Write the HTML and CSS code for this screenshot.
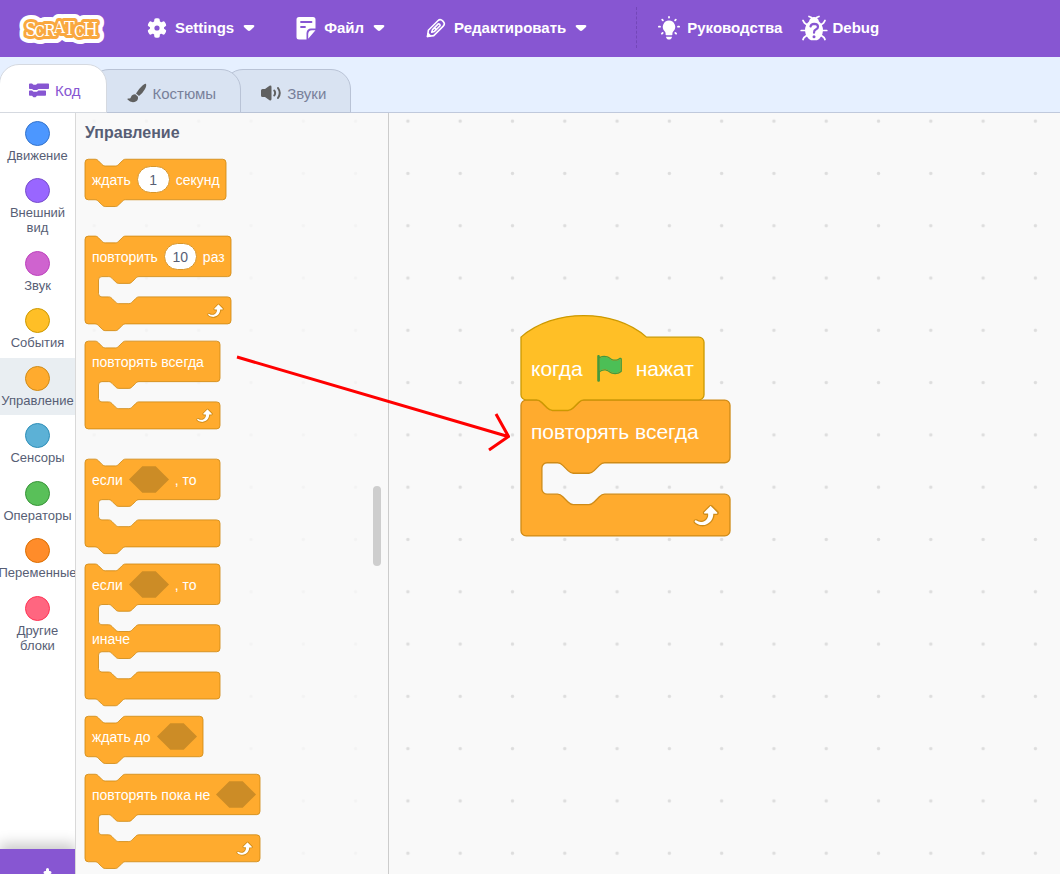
FILE: index.html
```html
<!DOCTYPE html>
<html lang="ru">
<head>
<meta charset="utf-8">
<title>Scratch</title>
<link rel="stylesheet" href="styles.css">
</head>
<body>
<svg class="sprites" aria-hidden="true">
  <symbol id="loop" viewBox="0 0 24 24">
    <path fill="#cf8b17" d="M23.3,11c-0.3,0.6-0.9,1-1.5,1h-1.6c-0.1,1.3-0.5,2.5-1.1,3.6c-0.9,1.7-2.3,3.2-4.1,4.1c-1.7,0.9-3.6,1.2-5.5,0.9c-1.8-0.3-3.5-1.1-4.9-2.3c-0.7-0.7-0.7-1.9,0-2.6c0.6-0.6,1.6-0.7,2.3-0.2H7c0.9,0.6,1.9,0.9,2.9,0.9s1.9-0.3,2.7-0.9c1.1-0.8,1.8-2.1,1.8-3.5h-1.5c-0.9,0-1.7-0.7-1.7-1.7c0-0.4,0.2-0.9,0.5-1.2l4.4-4.4c0.7-0.6,1.7-0.6,2.4,0L23,9.2C23.5,9.7,23.6,10.4,23.3,11z"/>
    <path fill="#fff" d="M21.8,11h-2.6c0,1.5-0.3,2.9-1,4.2c-0.8,1.6-2.1,2.8-3.7,3.6c-1.5,0.8-3.3,1.1-4.9,0.8c-1.6-0.2-3.2-1-4.4-2.1c-0.4-0.3-0.4-0.9-0.1-1.2c0.3-0.4,0.9-0.4,1.2-0.1l0,0c1,0.7,2.2,1.1,3.4,1.1s2.3-0.3,3.3-1c0.9-0.6,1.6-1.5,2-2.6c0.3-0.9,0.4-1.8,0.2-2.8h-2.4c-0.4,0-0.7-0.3-0.7-0.7c0-0.2,0.1-0.3,0.2-0.4l4.4-4.4c0.3-0.3,0.7-0.3,0.9,0L22,9.8c0.3,0.3,0.4,0.6,0.3,0.9S22,11,21.8,11z"/>
  </symbol>
  <symbol id="hex" viewBox="0 0 48 32"><path fill="#cc8c26" d="M16,0H32L48,16L32,32H16L0,16z"/></symbol>
  <symbol id="caret" viewBox="0 0 12 8"><path fill="#fff" d="M2,1H10Q12,1 11,3L7.500,6.300Q6,7.600 4.500,6.300L1,3Q0,1 2,1z"/></symbol>
</svg>

<header class="menu-bar">
  <a class="logo" href="#" aria-label="Scratch">
    <svg width="88" height="36" viewBox="0 0 88 36">
      <g class="logo-text">
        <g class="logo-halo">
          <text x="8" y="26" font-size="19">S</text><text x="17" y="27" font-size="16">C</text><text x="27" y="26" font-size="17">R</text><text x="37" y="23" font-size="17">A</text><text x="47" y="25" font-size="18">T</text><text x="57" y="27" font-size="16">C</text><text x="66" y="26" font-size="19">H</text>
        </g>
        <g class="logo-rim" aria-hidden="true">
          <text x="8" y="26" font-size="19">S</text><text x="17" y="27" font-size="16">C</text><text x="27" y="26" font-size="17">R</text><text x="37" y="23" font-size="17">A</text><text x="47" y="25" font-size="18">T</text><text x="57" y="27" font-size="16">C</text><text x="66" y="26" font-size="19">H</text>
        </g>
        <g class="logo-face" aria-hidden="true">
          <text x="8" y="26" font-size="19">S</text><text x="17" y="27" font-size="16">C</text><text x="27" y="26" font-size="17">R</text><text x="37" y="23" font-size="17">A</text><text x="47" y="25" font-size="18">T</text><text x="57" y="27" font-size="16">C</text><text x="66" y="26" font-size="19">H</text>
        </g>
      </g>
    </svg>
  </a>
  <nav class="menus">
    <button class="menu" type="button">
      <svg width="20" height="20" viewBox="0 0 20 20"><g fill="#fff"><circle cx="10" cy="10" r="7.200"/><rect x="7.200" y="0.300" width="5.600" height="19.400" rx="1.800"/><rect x="7.200" y="0.300" width="5.600" height="19.400" rx="1.800" transform="rotate(60 10 10)"/><rect x="7.200" y="0.300" width="5.600" height="19.400" rx="1.800" transform="rotate(120 10 10)"/></g><circle cx="10" cy="10" r="2.600" fill="#8756d2"/></svg>
      <span>Settings</span>
      <svg class="caret" width="12" height="8"><use href="#caret"/></svg>
    </button>
    <button class="menu" type="button">
      <svg width="20" height="24" viewBox="0 0 20 24"><path fill="#fff" d="M3,1H17Q19.500,1 19.500,3.500V12.500H15Q11,12.500 10.500,17V23.500H3Q0.500,23.500 0.500,21V3.500Q0.500,1 3,1zM19.500,14.200L12.200,22.800V18Q12.400,14.200 16,14.200z"/><path stroke="#8756d2" stroke-width="1.800" stroke-linecap="round" d="M5,6H15.500M5,11H9"/></svg>
      <span>Файл</span>
      <svg class="caret" width="12" height="8"><use href="#caret"/></svg>
    </button>
    <button class="menu" type="button">
      <svg width="20" height="20" viewBox="0 0 20 20"><g transform="translate(1.500 18.500) rotate(-45)" fill="none" stroke="#fff" stroke-width="1.600" stroke-linejoin="round" stroke-linecap="round"><path d="M0,0L5,-3.800H18.500Q21.800,-3.800 21.800,0T18.500,3.800H5z"/><path d="M16.500,-1.300H8.500L6,0L8.500,1.300H16.500Q18,0 16.500,-1.300z"/><path d="M11,-1V1"/><path fill="#fff" d="M0,0L2.500,-1.500V1.500z"/></g></svg>
      <span>Редактировать</span>
      <svg class="caret" width="12" height="8"><use href="#caret"/></svg>
    </button>
  </nav>
  <nav class="help">
    <button class="tool" type="button">
      <svg width="22" height="24" viewBox="0 0 22 24"><path fill="#fff" d="M11,4.500A6.300,6.300 0 0 1 15.400,15.200Q14.400,16.200 14.400,17.500V18.500Q14.400,19.300 13.600,19.300H8.400Q7.600,19.300 7.600,18.500V17.500Q7.600,16.200 6.600,15.200A6.300,6.300 0 0 1 11,4.500zM8,20.800H14Q13.600,23.600 11,23.600T8,20.800z"/><g stroke="#fff" stroke-width="1.800" stroke-linecap="round"><path d="M11,0.900V1.600M4.200,3.600L4.900,4.300M17.800,3.600L17.100,4.300M0.900,10.700H2M21.100,10.700H20M3.900,17.700L4.700,16.900M18.100,17.700L17.300,16.900"/></g></svg>
      <span>Руководства</span>
    </button>
    <button class="tool tool-debug" type="button">
      <svg width="28" height="26" viewBox="0 0 28 26"><g fill="none" stroke="#fff" stroke-width="1.700" stroke-linecap="round" stroke-linejoin="round"><path d="M9,1.500L11.500,2.500M19,1.500L16.500,2.500M3,5.500L4.500,8L8,10.500M25,5.500L23.500,8L20,10.500M1.200,15.500H7M26.800,15.500H21M3,24.500L4,22.500L8,19.500M25,24.500L24,22.500L20,19.500"/></g><path fill="#fff" d="M9,6.500Q10,2 14,2T19,6.500Q23,9.500 23,15.500Q22.500,22.500 17,25.300H11Q5.500,22.500 5,15.500Q5,9.500 9,6.500z"/><path fill="none" stroke="#8756d2" stroke-width="2.200" stroke-linecap="round" d="M10.500,11.500Q11,9 14.200,8.800Q18,8.800 18,11.800Q18,13.600 15.800,14.600Q14,15.500 14,17.700"/><circle cx="14" cy="21.700" r="1.500" fill="#8756d2"/></svg>
      <span>Debug</span>
    </button>
  </nav>
</header>

<div class="tabs" role="tablist">
  <button class="tab tab-active" role="tab" aria-selected="true" type="button">
    <svg width="20" height="16" viewBox="0 0 20 16"><path fill="#8756d2" d="M1,1.500H3L4.500,2.800H7L8.500,1.500H19.200Q20,1.500 20,2.300V6.200Q20,7 19.200,7H9.500L8,8H4.500L3,7H0.800Q0,7 0,6.200V2.300Q0,1.500 1,1.500zM0.800,8.500H3L4.500,9.800H8L9.300,8.500H16.200Q17,8.500 17,9.300V13Q17,13.800 16.200,13.800H8L6.500,15.200H4.500L3,13.800H0.800Q0,13.800 0,13V9.300Q0,8.500 0.800,8.500z"/></svg>
    Код
  </button>
  <button class="tab" role="tab" aria-selected="false" type="button">
    <svg width="20" height="20" viewBox="0 0 20 20"><path fill="#606060" d="M18.800,0.800Q20,2 18,6Q15.500,10.500 12,13L9,10.500Q11.500,6 15.500,2.500Q18,0.200 18.800,0.800zM8.300,11.300L11,13.700Q11.500,18 7.500,19Q3.500,19.800 0.500,16.500Q0,15.300 1.500,15.500Q3.500,16 4,14Q5,11.200 8.300,11.300z"/></svg>
    Костюмы
  </button>
  <button class="tab" role="tab" aria-selected="false" type="button">
    <svg width="20" height="18" viewBox="0 0 20 18"><path fill="#606060" d="M1.500,5H4L8.500,1.800Q10.500,1 10.500,3V15Q10.500,17 8.500,16.200L4,13H1.500Q0,13 0,11.500V6.500Q0,5 1.500,5z"/><path fill="none" stroke="#606060" stroke-width="2" stroke-linecap="round" d="M13.300,6.500Q15,9 13.300,11.500M17,4Q20.500,9 17,14"/></svg>
    Звуки
  </button>
</div>

<main class="editor">
  <aside class="sidebar">
    <nav class="categories">
      <button class="category" type="button"><i class="dot motion"></i>Движение</button>
      <button class="category" type="button"><i class="dot looks"></i>Внешний вид</button>
      <button class="category" type="button"><i class="dot sound"></i>Звук</button>
      <button class="category" type="button"><i class="dot events"></i>События</button>
      <button class="category selected" type="button"><i class="dot control"></i>Управление</button>
      <button class="category" type="button"><i class="dot sensing"></i>Сенсоры</button>
      <button class="category" type="button"><i class="dot operators"></i>Операторы</button>
      <button class="category" type="button"><i class="dot variables"></i>Переменные</button>
      <button class="category" type="button"><i class="dot custom"></i>Другие блоки</button>
    </nav>
    <button class="extensions" type="button" aria-label="Добавить расширение">
      <svg width="38" height="32" viewBox="0 0 38 32"><path stroke="#fff" stroke-width="3" stroke-linecap="round" d="M28.500,3.500V10M26,6.500H31"/></svg>
    </button>
  </aside>

  <div class="workspace">
    <svg class="grid" width="100%" height="100%" aria-hidden="true">
      <defs><pattern id="dots" width="40" height="40" patternUnits="userSpaceOnUse" patternTransform="translate(-8 -18) scale(1.3073)"><circle cx="20" cy="20" r="1.300" fill="#ddd"/></pattern></defs>
      <rect width="100%" height="100%" fill="url(#dots)"/>
    </svg>

    <section class="palette">
      <h2 class="palette-title">Управление</h2>

      <div class="block spaced-wide">
        <svg class="shape" width="141" height="41" viewBox="0 0 167 48"><path d="M0,4A4,4 0 0 1 4,0H12c2,0 3,1 4,2l4,4c1,1 2,2 4,2h12c2,0 3,-1 4,-2l4,-4c1,-1 2,-2 4,-2H163a4,4 0 0 1 4,4v40a4,4 0 0 1 -4,4H48c-2,0 -3,1 -4,2l-4,4c-1,1 -2,2 -4,2h-12c-2,0 -3,-1 -4,-2l-4,-4c-1,-1 -2,-2 -4,-2H4a4,4 0 0 1 -4,-4z"/></svg>
        <div class="label"><label for="wait">ждать</label><input id="wait" type="text" value="1"><span>секунд</span></div>
      </div>

      <div class="block">
        <svg class="shape" width="146" height="88" viewBox="0 0 173 104"><path d="M0,4A4,4 0 0 1 4,0H12c2,0 3,1 4,2l4,4c1,1 2,2 4,2h12c2,0 3,-1 4,-2l4,-4c1,-1 2,-2 4,-2H169a4,4 0 0 1 4,4v40a4,4 0 0 1 -4,4H64c-2,0 -3,1 -4,2l-4,4c-1,1 -2,2 -4,2h-12c-2,0 -3,-1 -4,-2l-4,-4c-1,-1 -2,-2 -4,-2h-8a4,4 0 0 0 -4,4v16a4,4 0 0 0 4,4h8c2,0 3,1 4,2l4,4c1,1 2,2 4,2h12c2,0 3,-1 4,-2l4,-4c1,-1 2,-2 4,-2H169a4,4 0 0 1 4,4v24a4,4 0 0 1 -4,4H48c-2,0 -3,1 -4,2l-4,4c-1,1 -2,2 -4,2h-12c-2,0 -3,-1 -4,-2l-4,-4c-1,-1 -2,-2 -4,-2H4a4,4 0 0 1 -4,-4z"/><use href="#loop" x="141" y="76" width="24" height="24"/></svg>
        <div class="label"><label for="repeat">повторить</label><input id="repeat" type="text" value="10"><span>раз</span></div>
      </div>

      <div class="block spaced">
        <svg class="shape" width="135" height="88" viewBox="0 0 160 104"><path d="M0,4A4,4 0 0 1 4,0H12c2,0 3,1 4,2l4,4c1,1 2,2 4,2h12c2,0 3,-1 4,-2l4,-4c1,-1 2,-2 4,-2H156a4,4 0 0 1 4,4v40a4,4 0 0 1 -4,4H64c-2,0 -3,1 -4,2l-4,4c-1,1 -2,2 -4,2h-12c-2,0 -3,-1 -4,-2l-4,-4c-1,-1 -2,-2 -4,-2h-8a4,4 0 0 0 -4,4v16a4,4 0 0 0 4,4h8c2,0 3,1 4,2l4,4c1,1 2,2 4,2h12c2,0 3,-1 4,-2l4,-4c1,-1 2,-2 4,-2H156a4,4 0 0 1 4,4v24a4,4 0 0 1 -4,4H4a4,4 0 0 1 -4,-4z"/><use href="#loop" x="128" y="76" width="24" height="24"/></svg>
        <div class="label"><span>повторять всегда</span></div>
      </div>

      <div class="block">
        <svg class="shape" width="135" height="88" viewBox="0 0 160 104"><path d="M0,4A4,4 0 0 1 4,0H12c2,0 3,1 4,2l4,4c1,1 2,2 4,2h12c2,0 3,-1 4,-2l4,-4c1,-1 2,-2 4,-2H156a4,4 0 0 1 4,4v40a4,4 0 0 1 -4,4H64c-2,0 -3,1 -4,2l-4,4c-1,1 -2,2 -4,2h-12c-2,0 -3,-1 -4,-2l-4,-4c-1,-1 -2,-2 -4,-2h-8a4,4 0 0 0 -4,4v16a4,4 0 0 0 4,4h8c2,0 3,1 4,2l4,4c1,1 2,2 4,2h12c2,0 3,-1 4,-2l4,-4c1,-1 2,-2 4,-2H156a4,4 0 0 1 4,4v24a4,4 0 0 1 -4,4H48c-2,0 -3,1 -4,2l-4,4c-1,1 -2,2 -4,2h-12c-2,0 -3,-1 -4,-2l-4,-4c-1,-1 -2,-2 -4,-2H4a4,4 0 0 1 -4,-4z"/></svg>
        <div class="label"><span>если</span><svg width="40" height="27"><use href="#hex"/></svg><span>, то</span></div>
      </div>

      <div class="block">
        <svg class="shape" width="135" height="135" viewBox="0 0 160 160"><path d="M0,4A4,4 0 0 1 4,0H12c2,0 3,1 4,2l4,4c1,1 2,2 4,2h12c2,0 3,-1 4,-2l4,-4c1,-1 2,-2 4,-2H156a4,4 0 0 1 4,4v40a4,4 0 0 1 -4,4H64c-2,0 -3,1 -4,2l-4,4c-1,1 -2,2 -4,2h-12c-2,0 -3,-1 -4,-2l-4,-4c-1,-1 -2,-2 -4,-2h-8a4,4 0 0 0 -4,4v16a4,4 0 0 0 4,4h8c2,0 3,1 4,2l4,4c1,1 2,2 4,2h12c2,0 3,-1 4,-2l4,-4c1,-1 2,-2 4,-2H156a4,4 0 0 1 4,4v24a4,4 0 0 1 -4,4H64c-2,0 -3,1 -4,2l-4,4c-1,1 -2,2 -4,2h-12c-2,0 -3,-1 -4,-2l-4,-4c-1,-1 -2,-2 -4,-2h-8a4,4 0 0 0 -4,4v16a4,4 0 0 0 4,4h8c2,0 3,1 4,2l4,4c1,1 2,2 4,2h12c2,0 3,-1 4,-2l4,-4c1,-1 2,-2 4,-2H156a4,4 0 0 1 4,4v24a4,4 0 0 1 -4,4H48c-2,0 -3,1 -4,2l-4,4c-1,1 -2,2 -4,2h-12c-2,0 -3,-1 -4,-2l-4,-4c-1,-1 -2,-2 -4,-2H4a4,4 0 0 1 -4,-4z"/></svg>
        <div class="label"><span>если</span><svg width="40" height="27"><use href="#hex"/></svg><span>, то</span></div>
        <div class="label label-else"><span>иначе</span></div>
      </div>

      <div class="block">
        <svg class="shape" width="118" height="41" viewBox="0 0 140 48"><path d="M0,4A4,4 0 0 1 4,0H12c2,0 3,1 4,2l4,4c1,1 2,2 4,2h12c2,0 3,-1 4,-2l4,-4c1,-1 2,-2 4,-2H136a4,4 0 0 1 4,4v40a4,4 0 0 1 -4,4H48c-2,0 -3,1 -4,2l-4,4c-1,1 -2,2 -4,2h-12c-2,0 -3,-1 -4,-2l-4,-4c-1,-1 -2,-2 -4,-2H4a4,4 0 0 1 -4,-4z"/></svg>
        <div class="label"><span>ждать до</span><svg width="40" height="27"><use href="#hex"/></svg></div>
      </div>

      <div class="block">
        <svg class="shape" width="175" height="88" viewBox="0 0 208 104"><path d="M0,4A4,4 0 0 1 4,0H12c2,0 3,1 4,2l4,4c1,1 2,2 4,2h12c2,0 3,-1 4,-2l4,-4c1,-1 2,-2 4,-2H204a4,4 0 0 1 4,4v40a4,4 0 0 1 -4,4H64c-2,0 -3,1 -4,2l-4,4c-1,1 -2,2 -4,2h-12c-2,0 -3,-1 -4,-2l-4,-4c-1,-1 -2,-2 -4,-2h-8a4,4 0 0 0 -4,4v16a4,4 0 0 0 4,4h8c2,0 3,1 4,2l4,4c1,1 2,2 4,2h12c2,0 3,-1 4,-2l4,-4c1,-1 2,-2 4,-2H204a4,4 0 0 1 4,4v24a4,4 0 0 1 -4,4H48c-2,0 -3,1 -4,2l-4,4c-1,1 -2,2 -4,2h-12c-2,0 -3,-1 -4,-2l-4,-4c-1,-1 -2,-2 -4,-2H4a4,4 0 0 1 -4,-4z"/><use href="#loop" x="176" y="76" width="24" height="24"/></svg>
        <div class="label"><span>повторять пока не</span><svg width="40" height="27"><use href="#hex"/></svg></div>
      </div>
      <div class="scroll-thumb"></div>
    </section>

    <div class="script">
      <div class="block block-large hat">
        <svg class="shape" width="183" height="63" viewBox="0 0 140 48"><path d="M0,0c25,-22 71,-22 96,0H136a4,4 0 0 1 4,4v40a4,4 0 0 1 -4,4H48c-2,0 -3,1 -4,2l-4,4c-1,1 -2,2 -4,2h-12c-2,0 -3,-1 -4,-2l-4,-4c-1,-1 -2,-2 -4,-2H4a4,4 0 0 1 -4,-4z"/></svg>
        <div class="label"><span>когда</span>
          <svg width="31" height="31" viewBox="0 0 24 24"><path fill="#4cbf56" d="M20.500,13.900C18,16 14.400,16 11.900,14c-1.100,-0.900 -2.500,-1.400 -4,-1.400c-1.200,0.100 -2.300,0.500 -3.400,1.100V4C7,2.600 10,2.900 12.200,4.600c2.400,1.900 5.700,1.900 8.100,0l0.300,0.100z"/><path fill="#45993d" d="M20.800,3.700c-0.400-0.200-0.900-0.100-1.200,0.200c-2,1.600-4.800,1.600-6.800,0c-2.300-1.900-5.600-2.300-8.300-1V2.500c0-0.600-0.500-1-1-1s-1,0.400-1,1v18.800c0,0.500,0.500,1,1,1h0.100c0.500,0,1-0.500,1-1v-6.400c1-0.700,2.100-1.200,3.400-1.300c1.200,0,2.400,0.400,3.400,1.200c2.900,2.300,7,2.300,9.800,0c0.300-0.200,0.400-0.500,0.400-0.900V4.700C21.600,4.200,21.300,3.800,20.800,3.700z M20.500,13.900C18,16,14.400,16,11.900,14c-1.100-0.900-2.500-1.400-4-1.400c-1.200,0.100-2.300,0.500-3.400,1.100V4C7,2.600,10,2.900,12.200,4.600c2.400,1.900,5.700,1.900,8.100,0c0.100,0,0.100,0,0.200,0c0,0,0.100,0.100,0.100,0.100L20.500,13.900z"/></svg>
          <span>нажат</span></div>
      </div>
      <div class="block block-large">
        <svg class="shape" width="209" height="136" viewBox="0 0 160 104"><path d="M0,4A4,4 0 0 1 4,0H12c2,0 3,1 4,2l4,4c1,1 2,2 4,2h12c2,0 3,-1 4,-2l4,-4c1,-1 2,-2 4,-2H156a4,4 0 0 1 4,4v40a4,4 0 0 1 -4,4H64c-2,0 -3,1 -4,2l-4,4c-1,1 -2,2 -4,2h-12c-2,0 -3,-1 -4,-2l-4,-4c-1,-1 -2,-2 -4,-2h-8a4,4 0 0 0 -4,4v16a4,4 0 0 0 4,4h8c2,0 3,1 4,2l4,4c1,1 2,2 4,2h12c2,0 3,-1 4,-2l4,-4c1,-1 2,-2 4,-2H156a4,4 0 0 1 4,4v24a4,4 0 0 1 -4,4H4a4,4 0 0 1 -4,-4z"/><use href="#loop" x="128" y="76" width="24" height="24"/></svg>
        <div class="label"><span>повторять всегда</span></div>
      </div>
    </div>

    <svg class="pointer" width="280" height="102" viewBox="0 0 280 102" aria-hidden="true"><path fill="none" stroke="#f00" stroke-width="3" d="M7,7L278,86.500M266,64L278.500,86.500L259,100"/></svg>
  </div>
</main>
</body>
</html>
```
FILE: styles.css
```css
* { box-sizing: border-box; }

body {
  margin: 0;
  height: 100vh;
  display: flex;
  flex-direction: column;
  overflow: hidden;
  font-family: "Liberation Sans", Arial, sans-serif;
  color: #575e75;
  background: #e6f0ff;
}

button {
  border: 0;
  margin: 0;
  padding: 0;
  background: none;
  color: inherit;
  font: inherit;
  cursor: pointer;
}

svg { display: block; flex: none; }
.sprites { position: absolute; width: 0; height: 0; }

/* Menu bar */
.menu-bar {
  flex: none;
  display: flex;
  align-items: center;
  height: 57px;
  padding: 0 0 2px 17px;
  background: #8756d2;
  color: #fff;
  font-size: 15px;
  font-weight: bold;
  white-space: nowrap;
}
.logo { margin-right: 42px; }
.logo svg { overflow: visible; }
.logo-text { font-family: "DejaVu Serif Condensed", "DejaVu Serif", serif; font-weight: normal; }
.logo-halo { fill: #fff; stroke: #fff; stroke-width: 14px; stroke-linejoin: round; }
.logo-rim { fill: #f9a83f; stroke: #f9a83f; stroke-width: 6px; stroke-linejoin: round; }
.logo-face { fill: #fff; }
.menus { display: flex; gap: 41px; }
.menu, .tool { display: flex; align-items: center; gap: 8px; height: 41px; }
.caret { margin-left: 1px; }
.help {
  display: flex;
  gap: 18px;
  margin-left: 49px;
  padding-left: 21px;
  border-left: 1px dashed #7347b8;
}
.tool { gap: 7px; }
.tool-debug { gap: 4px; }

/* Tabs */
.tabs {
  flex: none;
  display: flex;
  align-items: flex-end;
  height: 56px;
  border-bottom: 1px solid #c0c9dc;
}
.tab {
  display: flex;
  align-items: center;
  justify-content: center;
  gap: 6px;
  height: 44px;
  margin-left: -18px;
  margin-bottom: -1px;
  padding: 4px 24px 0 37px;
  border: 1px solid #b9c3d6;
  border-radius: 20px 20px 0 0;
  background: #d9e3f2;
  color: #78809a;
  font-size: 15px;
}
.tab:nth-child(2) { z-index: 1; position: relative; }
.tab-active {
  z-index: 2;
  position: relative;
  height: 49px;
  margin-left: -1px;
  padding: 3px 25px 0 29px;
  border-color: #d5d9e0;
  background: #fff;
  color: #8756d2;
}

/* Editor */
.editor { flex: 1; min-height: 0; display: flex; }
.sidebar {
  flex: none;
  display: flex;
  flex-direction: column;
  width: 76px;
  background: #fff;
  border-right: 1px solid #d9d9d9;
  overflow: hidden;
}
.categories { flex: 1; min-height: 0; }
.category {
  display: flex;
  flex-direction: column;
  align-items: center;
  gap: 2px;
  width: 100%;
  padding: 8px 8px 7px;
  font-size: 13px;
  line-height: 15px;
}
.category:nth-child(even) { margin-bottom: 1px; }
.selected { background: #e9eef2; }
.dot { width: 25px; height: 25px; border: 1px solid; border-radius: 50%; }
.motion { background: #4c97ff; border-color: #3373cc; }
.looks { background: #9966ff; border-color: #774dcb; }
.sound { background: #cf63cf; border-color: #bd42bd; }
.events { background: #ffbf26; border-color: #cc9900; }
.control { background: #ffab2e; border-color: #cf8b17; }
.sensing { background: #5cb1d6; border-color: #2e8eb8; }
.operators { background: #59c059; border-color: #389438; }
.variables { background: #ff8c2a; border-color: #db6e00; }
.custom { background: #ff6680; border-color: #ff3355; }
.extensions {
  flex: none;
  display: flex;
  justify-content: center;
  width: 76px;
  height: 25px;
  padding-top: 17px;
  background: #8756d2;
  box-shadow: 0 -5px 14px rgba(0, 0, 0, .22);
  overflow: hidden;
}

.workspace {
  position: relative;
  flex: 1;
  display: flex;
  background: #f9f9f9;
  overflow: hidden;
}
.grid { position: absolute; inset: 0; }
.palette {
  position: relative;
  width: 313px;
  padding: 10px 0 0 9px;
  background: rgba(249, 249, 249, .8);
  border-right: 1px solid #ccc;
}
.palette-title { margin: 0 0 16px; font-size: 16px; line-height: 20px; }
.scroll-thumb {
  position: absolute;
  top: 373px;
  right: 7px;
  width: 8px;
  height: 80px;
  border-radius: 4px;
  background: #cecece;
}

/* Blocks */
.block {
  display: grid;
  grid-template-columns: max-content;
  align-content: start;
  margin-bottom: 17px;
  color: #fff;
  font-size: 14px;
  white-space: nowrap;
}
.spaced { margin-bottom: 30px; }
.spaced-wide { margin-bottom: 36px; }
.shape {
  grid-area: 1 / 1 / 3 / 2;
  overflow: visible;
  fill: #ffab2e;
  stroke: #cf8b17;
  stroke-width: 1;
}
.shape use { stroke: none; }
.label {
  grid-area: 1 / 1;
  z-index: 1;
  display: flex;
  align-items: center;
  gap: 6px;
  height: 41px;
  padding-left: 7px;
}
.label-else { grid-area: 2 / 1; height: 27px; margin: 20px 0 47px; }
.label input {
  width: 33px;
  height: 27px;
  padding: 0;
  border: 1px solid #d8962a;
  border-radius: 14px;
  background: #fff;
  color: #575e75;
  font: inherit;
  text-align: center;
}

.script { position: absolute; left: 445px; top: 224px; }
.block-large { margin: 0; font-size: 21px; }
.block-large .label { height: 63px; gap: 11px; padding-left: 10px; }
.hat { position: relative; z-index: 1; }
.hat .shape { fill: #ffbf26; stroke: #cc9900; }

.pointer { position: absolute; left: 154px; top: 237px; }
```
